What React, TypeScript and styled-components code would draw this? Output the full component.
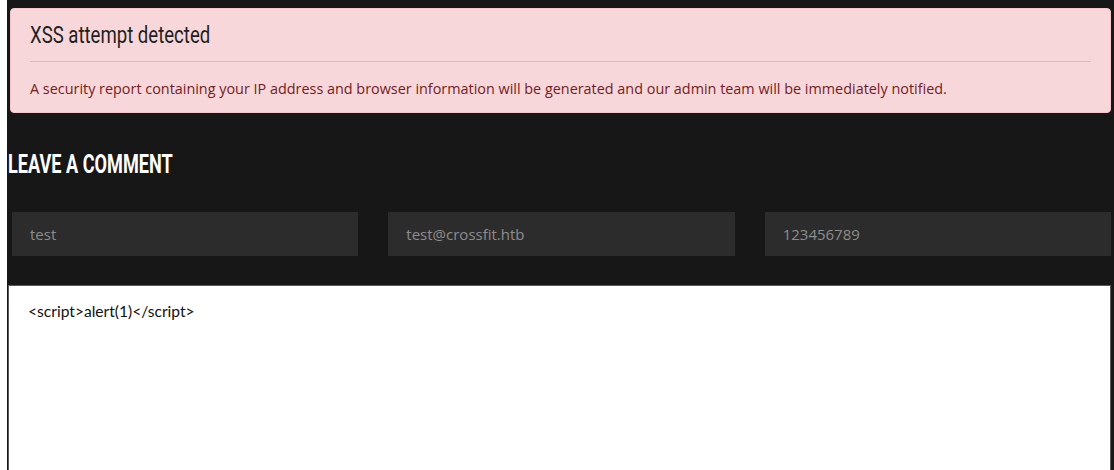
import { useEffect, useRef, useState } from "react"
import styled, { createGlobalStyle } from 'styled-components'

const GlobalStyle = createGlobalStyle`
  html, body {
    margin: 0;
    padding: 0;
    background: #fff;
  }
  body {
    font-family: "Open Sans", "Liberation Sans", sans-serif;
  }
`

// no condensed face on the box, so squeeze Roboto horizontally
const Condensed = styled.span<{ $squeeze: number }>`
  display: block;
  font-family: Roboto, "Liberation Sans", sans-serif;
  white-space: nowrap;
  transform: scaleX(${p => p.$squeeze});
  transform-origin: left center;
`

const Page = styled.div`
  margin-left: 7px;
  min-height: 470px;
  background: #171717;
  padding: 8px 3px 0 3px;
  box-sizing: border-box;
  overflow: hidden;
`

const Alert = styled.div`
  background: #f8d7da;
  border: 1px solid #f5c6cb;
  border-radius: 4px;
  color: #721c24;
  padding: 13px 19px 13px;

  h4 {
    margin: 0;
    font-weight: 400;
    font-size: 24px;
    line-height: 26px;
    color: #1f1f1f;
  }

  hr {
    margin: 13px 0 0;
    border: 0;
    border-top: 1px solid #f1b0b7;
  }

  p {
    margin: 17px 0 0;
    font-size: 14.4px;
    line-height: 20px;
  }
`

const CommentForm = styled.form`
  margin-top: 36px;
  margin-left: -2px;

  h3 {
    margin: 0;
    font-weight: 700;
    font-size: 25px;
    line-height: 32px;
    color: #fff;
    text-transform: uppercase;
  }
`

const Fields = styled.div`
  display: grid;
  grid-template-columns: repeat(3, 1fr);
  gap: 30px;
  margin: 31px 0 0 4px;
`

const Field = styled.input`
  height: 44px;
  border: 0;
  outline: none;
  background: #2c2c2c;
  color: #8c8c8c;
  padding: 0 18px;
  font-family: "Open Sans", sans-serif;
  font-size: 15px;
  box-sizing: border-box;
  width: 100%;
`

const Message = styled.textarea`
  display: block;
  width: 100%;
  height: 220px;
  margin-top: 29px;
  box-sizing: border-box;
  border: 1px solid #5a5a5a;
  outline: none;
  resize: none;
  background: #fff;
  color: #111;
  padding: 15px 19px;
  font-family: Lato, sans-serif;
  font-size: 15.6px;
  line-height: 20px;
  caret-color: #000;
`

export default function App() {
  const [comment, setComment] = useState('<script>alert(1)</script>')
  const box = useRef<HTMLTextAreaElement>(null)

  // keep the cursor parked after the typed payload
  useEffect(() => {
    const el = box.current
    if (!el) return
    el.focus()
    el.setSelectionRange(el.value.length, el.value.length)
  }, [])

  return (
    <>
      <GlobalStyle />
      <Page>
        <Alert role='alert'>
          <h4><Condensed $squeeze={0.774}>XSS attempt detected</Condensed></h4>
          <hr />
          <p>A security report containing your IP address and browser information will be generated and our admin team will be immediately notified.</p>
        </Alert>
        <CommentForm onSubmit={e => e.preventDefault()}>
          <h3><Condensed $squeeze={0.725}>Leave a comment</Condensed></h3>
          <Fields>
            <Field type='text' defaultValue='test' />
            <Field type='email' defaultValue='test@crossfit.htb' />
            <Field type='text' defaultValue='123456789' />
          </Fields>
          <Message ref={box} value={comment} onChange={e => setComment(e.target.value)} />
        </CommentForm>
      </Page>
    </>
  )
}
